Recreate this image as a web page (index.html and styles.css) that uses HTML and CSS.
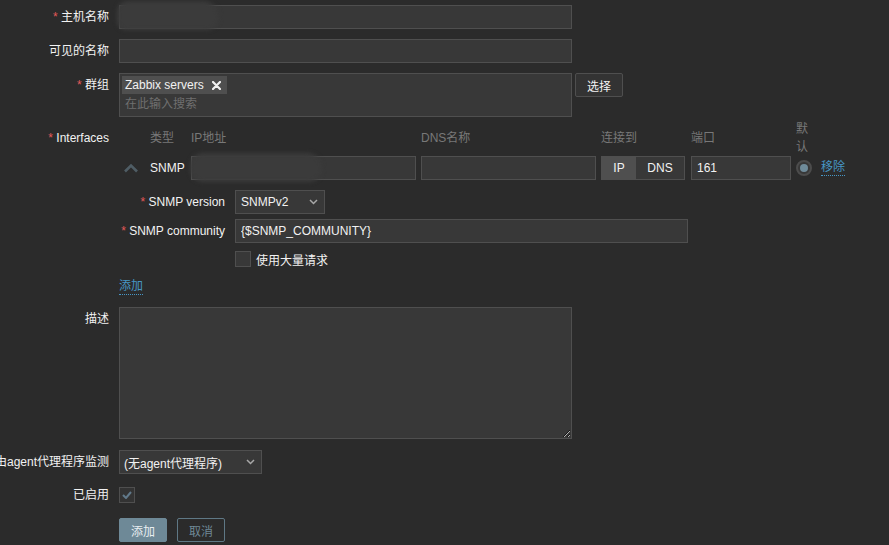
FILE: index.html
```html
<!DOCTYPE html>
<html>
<head>
<meta charset="utf-8">
<link rel="stylesheet" href="styles.css">
</head>
<body>
<div class="form">
  <div class="row">
    <div class="lbl"><span><i class="req">*</i> 主机名称</span></div>
    <div class="field rel">
      <input type="text" class="inp w453">
      <div class="blob blob-host"></div>
    </div>
  </div>

  <div class="row mt10">
    <div class="lbl"><span>可见的名称</span></div>
    <div class="field"><input type="text" class="inp w453"></div>
  </div>

  <div class="row mt10">
    <div class="lbl"><span><i class="req">*</i> 群组</span></div>
    <div class="field group-line">
      <div class="multi">
        <div class="tag"><span>Zabbix servers</span>
          <svg class="tag-x" width="9" height="9" viewBox="0 0 9 9"><path d="M1 1 L8 8 M8 1 L1 8" stroke="#f2f2f2" stroke-width="2.2" stroke-linecap="round"/></svg>
        </div>
        <div class="ph">在此输入搜索</div>
      </div>
      <button class="btn-alt">选择</button>
    </div>
  </div>

  <div class="row mt3">
    <div class="lbl lbl-if"><span><i class="req">*</i> Interfaces</span></div>
    <div class="field">
      <div class="if-grid">
        <div></div>
        <div class="hd">类型</div>
        <div class="hd">IP地址</div>
        <div class="hd">DNS名称</div>
        <div class="hd">连接到</div>
        <div class="hd">端口</div>
        <div class="hd hd-def">默<br>认</div>
        <div></div>

        <div class="chev">
          <svg width="16" height="10" viewBox="0 0 16 10"><polyline points="2,8.5 8,2.5 14,8.5" fill="none" stroke="#4f5d65" stroke-width="2.6"/></svg>
        </div>
        <div class="cell-txt">SNMP</div>
        <div class="rel"><input type="text" class="inp w225"><div class="blob blob-ip"></div></div>
        <div><input type="text" class="inp w175"></div>
        <div class="toggle"><span class="seg seg-on">IP</span><span class="seg">DNS</span></div>
        <div><input type="text" class="inp w100" value="161"></div>
        <div class="radio"><span class="dot"></span></div>
        <div><a class="link">移除</a></div>
      </div>

      <div class="details">
        <div class="dlbl"><span><i class="req">*</i> SNMP version</span></div>
        <div class="sel w90"><span>SNMPv2</span>
          <svg width="9" height="6" viewBox="0 0 9 6"><polyline points="1,1 4.5,4.5 8,1" fill="none" stroke="#a8a8a8" stroke-width="1.5"/></svg>
        </div>
        <div class="dlbl mt5"><span><i class="req">*</i> SNMP community</span></div>
        <div class="mt5"><input type="text" class="inp w453" value="{$SNMP_COMMUNITY}"></div>
        <div></div>
        <div class="chk-line mt8"><span class="chk"></span><span class="chk-txt">使用大量请求</span></div>
      </div>

      <div class="add-line"><a class="link">添加</a></div>
    </div>
  </div>

  <div class="row mt12">
    <div class="lbl"><span>描述</span></div>
    <div class="field"><textarea class="ta"></textarea></div>
  </div>

  <div class="row mt11">
    <div class="lbl"><span>由agent代理程序监测</span></div>
    <div class="field">
      <div class="sel w143"><span>(无agent代理程序)</span>
        <svg width="9" height="6" viewBox="0 0 9 6"><polyline points="1,1 4.5,4.5 8,1" fill="none" stroke="#a8a8a8" stroke-width="1.5"/></svg>
      </div>
    </div>
  </div>

  <div class="row mt13">
    <div class="lbl lbl-16"><span>已启用</span></div>
    <div class="field">
      <span class="chk chk-dis">
        <svg width="10" height="8" viewBox="0 0 10 8"><polyline points="1,4 4,7 9,1" fill="none" stroke="#61798a" stroke-width="2"/></svg>
      </span>
    </div>
  </div>

  <div class="row mt15">
    <div></div>
    <div class="field btns">
      <button class="btn-main">添加</button>
      <button class="btn-sec">取消</button>
    </div>
  </div>
</div>
</body>
</html>
```

FILE: styles.css
```css
html, body {
  margin: 0;
  padding: 0;
  background: #2b2b2b;
}
body {
  font-family: "Liberation Sans", "Noto Sans CJK SC", sans-serif;
  font-size: 12px;
  color: #f2f2f2;
  overflow: hidden;
  width: 889px;
  height: 545px;
}
.form {
  display: flex;
  flex-direction: column;
  padding-top: 5px;
}
.row {
  display: grid;
  grid-template-columns: 109px 1fr;
  column-gap: 10px;
}
.mt3 { margin-top: 3px; }
.mt5 { margin-top: 5px; }
.mt8 { margin-top: 8px; }
.mt10 { margin-top: 10px; }
.mt11 { margin-top: 11px; }
.mt12 { margin-top: 12px; }
.mt13 { margin-top: 13px; }
.mt15 { margin-top: 15px; }

.lbl, .dlbl {
  display: flex;
  justify-content: flex-end;
  white-space: nowrap;
  line-height: 24px;
  height: 24px;
}
.lbl-if { padding-top: 6px; }
.lbl-16 { line-height: 16px; height: 16px; }
.req {
  font-style: normal;
  color: #e45959;
}
.field { min-width: 0; }
.rel { position: relative; }

.inp {
  box-sizing: border-box;
  height: 24px;
  margin: 0;
  padding: 0 5px;
  background: #383838;
  border: 1px solid #4f4f4f;
  color: #f2f2f2;
  font-family: inherit;
  font-size: 12px;
  outline: none;
  display: block;
}
.w453 { width: 453px; }
.w225 { width: 225px; }
.w175 { width: 175px; }
.w100 { width: 100px; }

.blob {
  position: absolute;
  background: #3b3b3b;
  filter: blur(2px);
  pointer-events: none;
}
.blob-host {
  left: -2px;
  top: -4px;
  width: 102px;
  height: 29px;
  border-radius: 14px 20px 16px 12px;
}
.blob-ip {
  left: -1px;
  top: -3px;
  width: 132px;
  height: 29px;
  border-radius: 14px 16px 14px 14px;
}

.group-line {
  display: flex;
  align-items: flex-start;
  gap: 3px;
}
.multi {
  box-sizing: border-box;
  width: 453px;
  height: 44px;
  background: #383838;
  border: 1px solid #4f4f4f;
  padding: 2px;
}
.tag {
  display: inline-flex;
  align-items: center;
  height: 18px;
  background: #4f4f4f;
  padding: 0 6px 0 3px;
  line-height: 18px;
}
.tag-x { margin-left: 8px; }
.ph {
  height: 18px;
  line-height: 18px;
  padding-left: 3px;
  margin-top: 1px;
  color: #6f6f6f;
}
.btn-alt {
  box-sizing: border-box;
  width: 48px;
  height: 24px;
  margin: 0;
  padding: 0;
  background: #333333;
  border: 1px solid #4f4f4f;
  border-radius: 2px;
  color: #f2f2f2;
  font-family: inherit;
  font-size: 12px;
}

.if-grid {
  display: grid;
  grid-template-columns: 31px 41px 230px 180px 90px 105px 25px auto;
  align-items: center;
}
.hd {
  color: #787878;
  line-height: 18px;
}
.hd-def { line-height: 18px; }
.chev {
  display: flex;
  align-items: center;
  padding-left: 4px;
}
.cell-txt { line-height: 24px; }
.toggle {
  box-sizing: border-box;
  width: 84px;
  height: 24px;
  border: 1px solid #4f4f4f;
  display: flex;
  background: #383838;
}
.seg {
  display: flex;
  align-items: center;
  justify-content: center;
  flex: 1;
}
.seg-on {
  flex: 0 0 34px;
  background: #4f4f4f;
}
.radio {
  box-sizing: border-box;
  width: 16px;
  height: 16px;
  border-radius: 50%;
  background: #383838;
  border: 2px solid #4c4c4c;
  display: flex;
  align-items: center;
  justify-content: center;
}
.dot {
  width: 8px;
  height: 8px;
  border-radius: 50%;
  background: #6f8b9a;
}
.link {
  display: inline-block;
  color: #4796c4;
  line-height: 15px;
  border-bottom: 1px dotted #4796c4;
  cursor: pointer;
}

.details {
  display: grid;
  grid-template-columns: 106px 1fr;
  column-gap: 10px;
  margin-top: 10px;
}
.sel {
  box-sizing: border-box;
  height: 24px;
  background: #383838;
  border: 1px solid #4f4f4f;
  display: flex;
  align-items: center;
  justify-content: space-between;
  padding: 0 6px 0 5px;
  white-space: nowrap;
}
.w90 { width: 90px; }
.w143 { width: 143px; padding-left: 4px; }
.chk-line {
  display: flex;
  align-items: center;
  height: 16px;
}
.chk {
  box-sizing: border-box;
  width: 16px;
  height: 16px;
  background: #383838;
  border: 1px solid #4f4f4f;
  display: flex;
  align-items: center;
  justify-content: center;
}
.chk-txt { margin-left: 5px; }
.chk-dis { background: #333333; }
.add-line {
  margin-top: 12px;
  height: 16px;
}

.ta {
  box-sizing: border-box;
  display: block;
  width: 453px;
  height: 132px;
  margin: 0;
  background: #383838;
  border: 1px solid #4f4f4f;
  color: #f2f2f2;
  outline: none;
  resize: both;
}

.btns {
  display: flex;
  gap: 10px;
}
.btn-main, .btn-sec {
  box-sizing: border-box;
  width: 48px;
  height: 24px;
  margin: 0;
  padding: 0;
  border-radius: 2px;
  font-family: inherit;
  font-size: 12px;
}
.btn-main {
  background: #6e8997;
  border: 1px solid #6e8997;
  color: #e8eef1;
}
.btn-sec {
  background: transparent;
  border: 1px solid #5f7885;
  color: #6f8896;
}
```
